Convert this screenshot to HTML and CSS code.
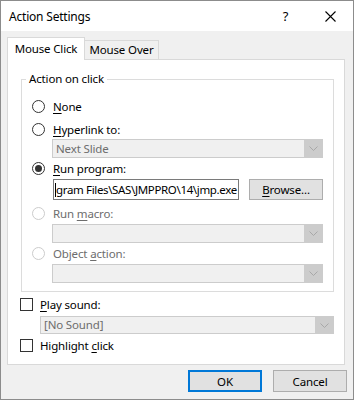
FILE: index.html
```html
<!DOCTYPE html>
<html>
<head>
<meta charset="utf-8">
<link rel="stylesheet" href="styles.css">
</head>
<body>
<div class="window">
  <div class="titlebar">
    <span class="title">Action Settings</span>
    <span class="tbtn help">?</span>
    <span class="tbtn close"><svg width="11" height="11" viewBox="0 0 11 11"><path d="M0.5 0.5 L10.5 10.5 M10.5 0.5 L0.5 10.5" stroke="#000" stroke-width="1.1" fill="none"/></svg></span>
  </div>
  <div class="main">
    <div class="tabs">
      <div class="tab active">Mouse Click</div>
      <div class="tab">Mouse Over</div>
    </div>
    <div class="panel">
      <fieldset class="group">
        <legend>Action on click</legend>
        <div class="opt r-none"><span class="radio"></span><span><u>N</u>one</span></div>
        <div class="opt r-link"><span class="radio"></span><span><u>H</u>yperlink to:</span></div>
        <div class="select indent s1"><span class="sel-text">Next Slide</span><span class="arrow"><svg width="9" height="5" viewBox="0 0 9 5"><path d="M0.5 0.5 L4.5 4.5 L8.5 0.5" stroke="#a8a8a8" fill="none"/></svg></span></div>
        <div class="opt r-prog"><span class="radio on"></span><span><u>R</u>un program:</span></div>
        <div class="prog-row indent">
          <div class="textbox"><span class="caret"></span>gram Files\SAS\JMPPRO\14\jmp.exe</div>
          <div class="btn browse"><u>B</u>rowse...</div>
        </div>
        <div class="opt dis r-macro"><span class="radio"></span><span>Run <u>m</u>acro:</span></div>
        <div class="select indent s2"><span class="sel-text"></span><span class="arrow"><svg width="9" height="5" viewBox="0 0 9 5"><path d="M0.5 0.5 L4.5 4.5 L8.5 0.5" stroke="#a8a8a8" fill="none"/></svg></span></div>
        <div class="opt dis r-obj"><span class="radio"></span><span>Object <u>a</u>ction:</span></div>
        <div class="select indent s3"><span class="sel-text"></span><span class="arrow"><svg width="9" height="5" viewBox="0 0 9 5"><path d="M0.5 0.5 L4.5 4.5 L8.5 0.5" stroke="#a8a8a8" fill="none"/></svg></span></div>
      </fieldset>
      <div class="opt chk c-sound"><span class="checkbox"></span><span><u>P</u>lay sound:</span></div>
      <div class="select sound"><span class="sel-text">[No Sound]</span><span class="arrow"><svg width="9" height="5" viewBox="0 0 9 5"><path d="M0.5 0.5 L4.5 4.5 L8.5 0.5" stroke="#a8a8a8" fill="none"/></svg></span></div>
      <div class="opt chk c-high"><span class="checkbox"></span><span>Highlight <u>c</u>lick</span></div>
    </div>
    <div class="footer">
      <div class="btn ok">OK</div>
      <div class="btn cancel">Cancel</div>
    </div>
  </div>
</div>
</body>
</html>
```
FILE: styles.css
```css
html, body {
  margin: 0;
  padding: 0;
}
body {
  font-family: "Noto Sans", "Open Sans", sans-serif;
  font-size: 11.5px;
  letter-spacing: -0.15px;
  color: #000;
}
u {
  text-decoration: underline;
  text-underline-offset: 2px;
}
.window {
  width: 354px;
  height: 400px;
  box-sizing: border-box;
  border: 1px solid #8c8c8c;
  background: #f0f0f0;
  display: flex;
  flex-direction: column;
}
.titlebar {
  height: 30px;
  background: #fff;
  display: flex;
  align-items: center;
  padding-left: 8px;
}
.title {
  flex: 1;
  font-size: 12px;
  letter-spacing: -0.2px;
}
.tbtn {
  width: 46px;
  height: 30px;
  display: flex;
  align-items: center;
  justify-content: center;
}
.help {
  font-size: 13px;
  padding-left: 3px;
  box-sizing: border-box;
}
.main {
  flex: 1;
  display: flex;
  flex-direction: column;
  padding: 6px 6px 0 6px;
}
.tabs {
  display: flex;
  align-items: flex-end;
  height: 22px;
}
.tab {
  box-sizing: border-box;
  border: 1px solid #d9d9d9;
  border-bottom: none;
  height: 19px;
  line-height: 17px;
  text-align: center;
}
.tab.active {
  width: 78px;
  height: 23px;
  line-height: 21px;
  background: #fff;
  margin-bottom: -1px;
  position: relative;
  z-index: 1;
}
.tab:not(.active) {
  width: 75px;
  margin-left: -1px;
  background: #f0f0f0;
}
.panel {
  box-sizing: border-box;
  width: 338px;
  height: 306px;
  border: 1px solid #d9d9d9;
  background: #fff;
  display: flex;
  flex-direction: column;
}
.group {
  box-sizing: border-box;
  width: 313px;
  margin: 11px 0 0 13px;
  padding: 0 10px 8px 10px;
  border: 1px solid #dcdcdc;
  display: flex;
  flex-direction: column;
}
.group legend {
  padding: 0 3px;
  margin-left: -6px;
  line-height: 16px;
}
.opt {
  display: flex;
  align-items: center;
  height: 18px;
  gap: 8px;
}
.opt.dis {
  color: #6d6d6d;
}
.radio {
  box-sizing: border-box;
  width: 13px;
  height: 13px;
  border: 1px solid #333;
  border-radius: 50%;
  background: #fff;
  display: flex;
  align-items: center;
  justify-content: center;
}
.radio.on::after {
  content: "";
  width: 7px;
  height: 7px;
  border-radius: 50%;
  background: #333;
}
.opt.dis .radio {
  border-color: #cccccc;
}
.r-none { margin-top: 10px; }
.r-link { margin-top: 5px; }
.s1 { margin-top: 1px; }
.r-prog { margin-top: 1px; }
.prog-row { margin-top: 2px; }
.r-macro { margin-top: 4px; }
.s2 { margin-top: 2px; }
.r-obj { margin-top: 1px; }
.s3 { margin-top: 2px; }
.indent {
  margin-left: 20px;
}
.select {
  box-sizing: border-box;
  height: 19px;
  border: 1px solid #cccccc;
  background: #f0f0f0;
  color: #6d6d6d;
  display: flex;
  align-items: stretch;
}
.select.indent {
  width: 271px;
}
.sel-text {
  flex: 1;
  padding-left: 3px;
  line-height: 17px;
}
.arrow {
  width: 19px;
  margin: -1px -1px -1px 0;
  background: #cccccc;
  display: flex;
  align-items: center;
  justify-content: center;
}
.prog-row {
  display: flex;
  align-items: stretch;
  height: 21px;
  gap: 10px;
}
.textbox {
  box-sizing: border-box;
  width: 186px;
  margin-left: 1px;
  border: 1px solid #7a7a7a;
  background: #fff;
  white-space: nowrap;
  overflow: hidden;
  padding-left: 1px;
  display: flex;
  align-items: center;
  letter-spacing: -0.35px;
}
.caret {
  display: inline-block;
  flex: none;
  width: 1px;
  height: 14px;
  background: #000;
}
.btn {
  box-sizing: border-box;
  border: 1px solid #adadad;
  background: #e1e1e1;
  display: flex;
  align-items: center;
  justify-content: center;
}
.browse {
  width: 74px;
}
.chk {
  margin-left: 12px;
  gap: 7px;
}
.checkbox {
  box-sizing: border-box;
  width: 13px;
  height: 13px;
  border: 1px solid #333;
  background: #fff;
}
.c-sound { margin-top: 3px; }
.sound {
  width: 294px;
  height: 18px;
  margin: 3px 0 0 32px;
}
.sound .sel-text {
  line-height: 16px;
}
.c-high { margin-top: 2px; }
.footer {
  display: flex;
  justify-content: flex-end;
  gap: 11px;
  margin-top: 5px;
}
.footer .btn {
  width: 74px;
  height: 22px;
}
.ok {
  border: 2px solid #0078d7 !important;
}
```
